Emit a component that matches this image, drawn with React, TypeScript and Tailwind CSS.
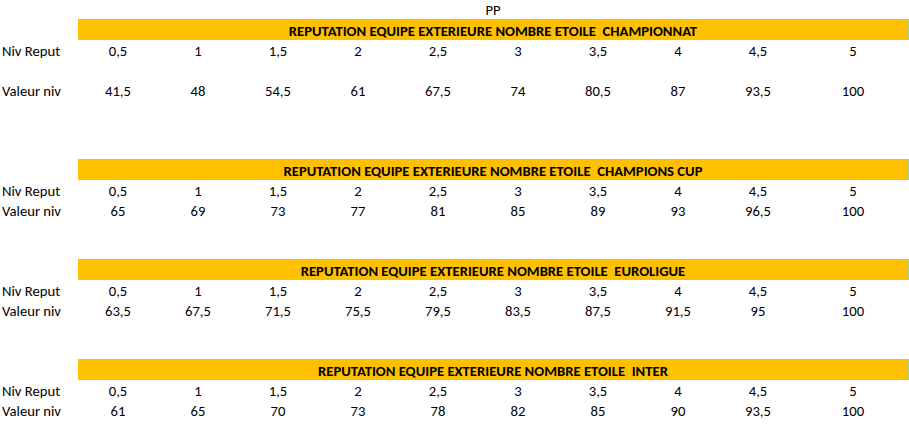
import React from "react";

type Section = {
  title: string;
  values: string[];
  spacer: boolean;
  mt: string;
};

const levels = ["0,5", "1", "1,5", "2", "2,5", "3", "3,5", "4", "4,5", "5"];

const sections: Section[] = [
  {
    title: "REPUTATION EQUIPE EXTERIEURE NOMBRE ETOILE  CHAMPIONNAT",
    values: ["41,5", "48", "54,5", "61", "67,5", "74", "80,5", "87", "93,5", "100"],
    spacer: true,
    mt: "mt-0",
  },
  {
    title: "REPUTATION EQUIPE EXTERIEURE NOMBRE ETOILE  CHAMPIONS CUP",
    values: ["65", "69", "73", "77", "81", "85", "89", "93", "96,5", "100"],
    spacer: false,
    mt: "mt-[59px]",
  },
  {
    title: "REPUTATION EQUIPE EXTERIEURE NOMBRE ETOILE  EUROLIGUE",
    values: ["63,5", "67,5", "71,5", "75,5", "79,5", "83,5", "87,5", "91,5", "95", "100"],
    spacer: false,
    mt: "mt-[39px]",
  },
  {
    title: "REPUTATION EQUIPE EXTERIEURE NOMBRE ETOILE  INTER",
    values: ["61", "65", "70", "73", "78", "82", "85", "90", "93,5", "100"],
    spacer: false,
    mt: "mt-[39px]",
  },
];

function Row({ label, cells }: { label: string; cells: string[] }) {
  return (
    <div className="grid h-[20px] grid-cols-[78px_repeat(9,80px)_110px] pt-[3px] leading-[17px]">
      <div className="whitespace-pre pl-[2px]">{label}</div>
      {cells.map((c, i) => (
        <div key={i} className="text-center">
          {c}
        </div>
      ))}
    </div>
  );
}

function Block({ s }: { s: Section }) {
  return (
    <div className={s.mt}>
      <div className="flex h-[21px]">
        <div className="w-[78px]" />
        <div className="flex h-[21px] w-[830px] justify-center bg-[#ffc000] pt-[3px] text-[14.67px] font-bold leading-[18px] whitespace-pre">
          {s.title}
        </div>
        <div className="h-[21px] w-px bg-[#9fd08e]" />
      </div>
      <Row label="Niv Reput" cells={levels} />
      {s.spacer && <div className="h-[20px]" />}
      <Row label="Valeur niv" cells={s.values} />
    </div>
  );
}

export default function App() {
  return (
    <div className="h-[430px] w-[909px] overflow-hidden bg-white font-['Carlito','Liberation_Sans',sans-serif] text-[14.67px] text-black">
      <div className="flex h-[19px] pt-[2px] leading-[17px]">
        <div className="w-[908px] pl-[78px] text-center">PP</div>
      </div>
      {sections.map((s, i) => (
        <Block key={i} s={s} />
      ))}
    </div>
  );
}
